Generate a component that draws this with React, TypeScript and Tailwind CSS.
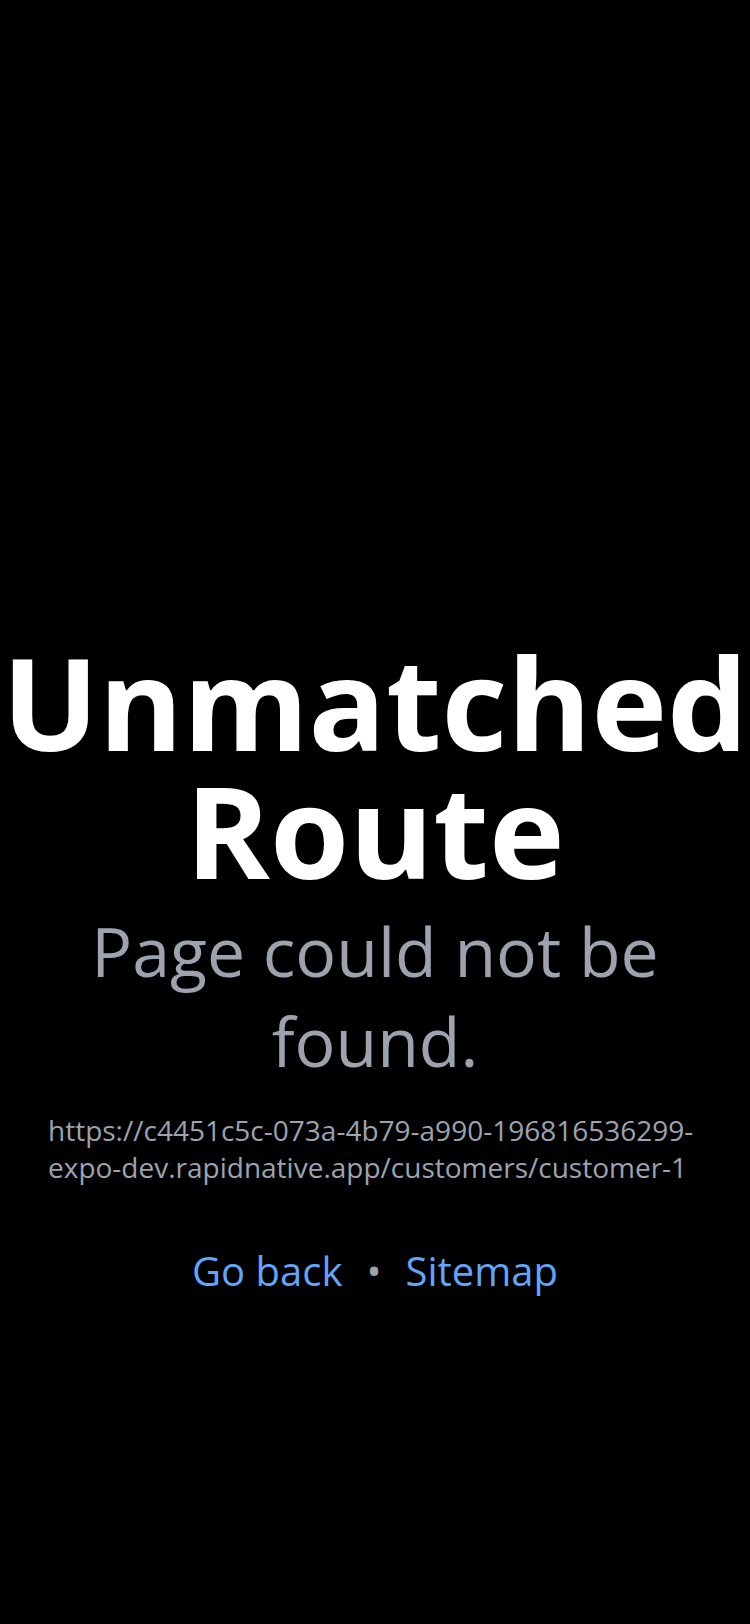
export default function App() {
  return (
    <main className="min-h-screen w-full bg-black font-['Open_Sans',sans-serif]">
      <div className="flex flex-col items-center pt-[638px]">
        <h1 className="w-full text-center text-[128px] font-bold leading-[128px] text-white">
          Unmatched Route
        </h1>
        <p className="mt-3 w-full px-10 text-center text-[68px] leading-[90px] text-[#9ca3af]">
          Page could not be found.
        </p>
        <p className="mt-[26px] w-full px-12 text-left text-[28px] leading-[37px] text-[#9ca3af]">
          https://c4451c5c-073a-4b79-a990-196816536299-expo-dev.rapidnative.app/customers/customer-1
        </p>
        <div className="mt-[55px] flex items-center gap-6 text-[40px] text-[#60a5fa]">
          <span>Go back</span>
          <span className="text-[#a3a3a3]">•</span>
          <span>Sitemap</span>
        </div>
      </div>
    </main>
  );
}
